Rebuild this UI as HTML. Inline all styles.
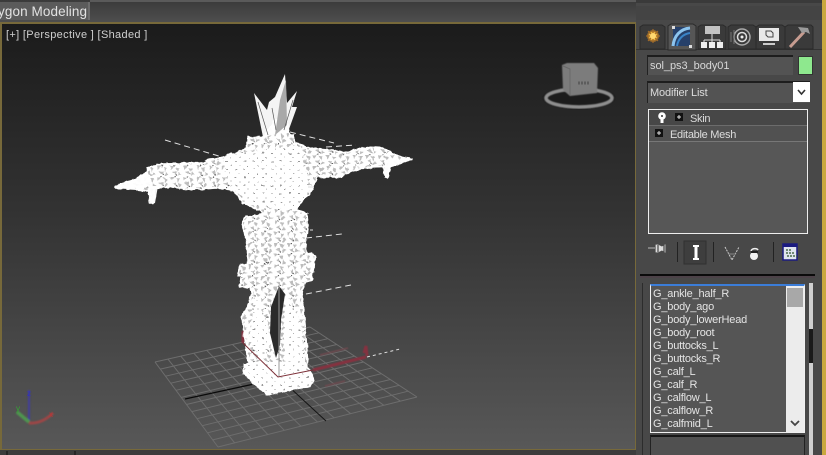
<!DOCTYPE html>
<html>
<head>
<meta charset="utf-8">
<style>
html,body{margin:0;padding:0;background:#444}
#p{position:relative;width:826px;height:455px;overflow:hidden;background:#484848;font-family:"Liberation Sans",sans-serif;font-size:11px;color:#dcdcdc}
#p div{position:absolute;box-sizing:border-box}
.t{white-space:nowrap;line-height:13px}
.l{left:653px;letter-spacing:-.2px;color:#e4e4e4}
</style>
</head>
<body>
<div id="p">
<div style="left:0;top:0;width:636px;height:22px;background:linear-gradient(#3a3a3a,#4e4e4e)"></div>
<div style="left:90px;top:0;width:546px;height:2px;background:#5a5a5a"></div>
<div style="left:0;top:2px;width:90px;height:18px;background:#5b5b5b;border-right:2px solid #6d6d6d"></div>
<div class="t" style="left:-2px;top:4px;font-size:13.5px;line-height:15px;color:#e2e2e2;letter-spacing:.1px">ygon Modeling</div>

<svg style="position:absolute;left:0;top:0" width="636" height="455" viewBox="0 0 636 455">
<defs>
<linearGradient id="bg" x1="0" y1="0" x2="0" y2="1"><stop offset="0" stop-color="#1b1b1b"/><stop offset=".45" stop-color="#333"/><stop offset="1" stop-color="#585858"/></linearGradient>
<pattern id="w" width="13" height="11" patternUnits="userSpaceOnUse">
<rect width="13" height="11" fill="#fff"/>
<path d="M1 1l4 0-3 4zM7 2l4 1-2 4zM3 7l4-1 0 4zM10 7l3 2-4 2z" fill="#bdbdbd"/>
<path d="M5 0l1 1M7 9l1 1" stroke="#555" stroke-width="1"/>
</pattern>
<pattern id="w2" width="9" height="8" patternUnits="userSpaceOnUse">
<rect width="9" height="8" fill="#fff"/>
<path d="M1 1h2v1h-2zM5 5h1v1h-1z" fill="#999"/>
</pattern>
<filter id="rough" x="-5%" y="-5%" width="110%" height="110%">
<feTurbulence type="fractalNoise" baseFrequency=".18" numOctaves="2" seed="4" result="n"/>
<feDisplacementMap in="SourceGraphic" in2="n" scale="4" xChannelSelector="R" yChannelSelector="G"/>
</filter>
<filter id="b1"><feGaussianBlur stdDeviation=".9"/></filter>
<filter id="b2"><feGaussianBlur stdDeviation=".5"/></filter>
</defs>
<rect x="1" y="23" width="635" height="427" fill="url(#bg)" stroke="#77693a" stroke-width="2"/>
<rect x="0" y="450" width="636" height="5" fill="#3c3c3c"/>
<path d="M7 451v4M75 451v4" stroke="#111"/>

<path fill="none" stroke="#6d6d6d" stroke-width="1" d="M155 362L218 447M167.900 359.100L234.600 442.800M180.800 356.200L251.200 438.700M193.800 353.200L267.700 434.500M206.700 350.300L284.300 430.300M219.600 347.400L300.900 426.200M232.500 344.500L317.500 422M245.400 341.600L334.100 417.800M258.300 338.700L350.700 413.700M271.300 335.700L367.200 409.500M284.200 332.800L383.800 405.300M297.100 329.900L400.400 401.200M310 327L417 397M155 362L310 327M160.300 369.100L318.900 332.800M165.500 376.200L327.800 338.700M170.800 383.200L336.800 344.500M176 390.300L345.700 350.300M181.300 397.400L354.600 356.200M186.500 404.500L363.500 362M191.800 411.600L372.400 367.800M197 418.700L381.400 373.700M202.300 425.700L390.300 379.500M207.500 432.800L399.200 385.300M212.800 439.900L408.100 391.200M218 447L417 397"/>
<path d="M185 399L254 384" stroke="#0a0a0a" stroke-width="1.200" fill="none"/>
<path d="M287 385L326 421" stroke="#151515" stroke-width="1" fill="none"/>
<g filter="url(#b2)">
<path d="M313 370L366 357M364 353l2-7 1 10" stroke="#85323f" stroke-width="3" fill="none"/>
<path d="M320 355l28-7M325 386l20-5" stroke="#6e4a50" stroke-width="1.500" fill="none"/>
<path d="M243 331v12" stroke="#85323f" stroke-width="3"/>
</g>

<g filter="url(#rough)">
<path fill="url(#w)" stroke="#fff" stroke-width="1.500" stroke-linejoin="round" d="M115 186L133 180L147 173L147 168L162 164L200 163L210 160L223 157L247 148L247 137L263 137L275 120L288 125L288 132L293 135L295 143L313 148L333 150L343 153L367 147L383 148L400 157L412 159L400 163L390 167L388 178L385 177L383 167L360 168L340 177L317 177L310 193L300 200L297 210L307 213L308 230L305 240L307 253L315 255L312 280L305 282L302 297L305 323L308 367L314 380L310 387L290 388L283 392L267 395L253 383L243 373L248 363L242 317L253 293L250 287L240 287L241 278L247 277L238 275L240 265L247 265L247 243L242 223L243 218L263 214L260 210L243 203L233 190L217 188L190 190L173 187L155 188L154 203L150 203L148 190L133 189L115 188Z"/>
<path fill="url(#w2)" d="M243 363L305 360L314 380L310 387L283 392L267 395L243 373ZM225 155L300 145L310 190L297 210L250 205L225 180ZM255 290L250 340L262 360L272 340ZM285 290L300 320L305 360L285 365Z"/>
</g>
<path fill="#fff" d="M115 186L133 180L150 175L152 186L133 189L115 188ZM148 186L158 186L155 203L150 203ZM385 160L412 159L400 163L390 167L388 178L385 177Z" opacity=".95"/>
<path fill="#fff" d="M263 137L254 93L267 110L269 102L275 97L285 74L287 103L297 91L292 107L297 107L288 132Z" opacity=".95"/>
<path fill="#a9a9a9" d="M280 100L286 80L287 125L275 135Z"/>
<path stroke="#555" stroke-width=".7" fill="none" d="M258 102L268 135M293 100L284 130M272 108L276 130"/>
<path fill="#2a2a2a" d="M279 286L271 307L270 333L276 358L280 345L281 320L285 294Z"/>
<path d="M279 285V377" stroke="#9a9a9a"/>
<path d="M243 343L278 377L313 370" stroke="#7d3038" fill="none"/>

<g stroke="#e0e0e0" stroke-width="1" stroke-dasharray="6 4" fill="none">
<path d="M165 140L222 157"/>
<path d="M290 132L334 143"/>
<path d="M326 147L356 145"/>
<path d="M306 238L342 234"/>
<path d="M306 294L351 285"/>
<path d="M367 357L400 349" stroke-dasharray="3 3"/>
</g>
<path d="M308 187h6M310 230h3" stroke="#ddd"/>

<ellipse cx="579" cy="98" rx="36" ry="11" fill="#1c1c1c" filter="url(#b2)"/>
<ellipse cx="579" cy="98" rx="33" ry="9" fill="none" stroke="#8e8e8e" stroke-width="3.500" filter="url(#b2)"/>
<path d="M562 65L567 63L594 63L598 68L597 93L570 96L563 90Z" fill="#7c7c7c" filter="url(#b2)"/>
<path d="M563 66L570 69L570 95" fill="none" stroke="#6a6a6a"/>
<path d="M578 83h12" stroke="#5d5d5d" stroke-width="3" stroke-dasharray="2 1"/>

<g filter="url(#b1)" opacity=".85">
<path d="M29 390V422" stroke="#3c3aa8" stroke-width="2"/>
<path d="M29 422L17 412" stroke="#4ea04e" stroke-width="3.500"/>
<path d="M29 423Q42 424 53 413" stroke="#a84444" stroke-width="3" fill="none"/>
</g>
<text x="27" y="396" font-size="8" fill="#3030c0" font-family="Liberation Sans">z</text>
<text x="49" y="417" font-size="8" fill="#b33" font-family="Liberation Sans">x</text>
<text x="16" y="411" font-size="8" fill="#3a3" font-family="Liberation Sans">y</text>
</svg>

<div class="t" style="left:6px;top:29px;color:#cfcfcf;letter-spacing:.33px">[+] [Perspective ] [Shaded ]</div>

<!-- right panel -->
<div style="left:636px;top:0;width:186px;height:455px;background:#484848"></div>
<div style="left:636px;top:0;width:186px;height:3px;background:#3a3a3a"></div>
<div style="left:636px;top:6px;width:186px;height:14px;background:#444"></div>
<div style="left:822px;top:0;width:4px;height:455px;background:#c9a83f"></div>
<div style="left:636px;top:49px;width:186px;height:1px;background:#333"></div>

<svg style="position:absolute;left:636px;top:22px" width="186" height="30" viewBox="0 0 186 30">
<g fill="#3a3a3a" stroke="#2a2a2a">
<path d="M4 27V5l3-2h19l3 2v22z"/>
<path d="M62 27V5l3-2h22l3 2v22z"/>
<path d="M92 27V5l3-2h22l3 2v22z"/>
<path d="M120 27V5l3-2h23l3 2v22z"/>
<path d="M149 27V5l3-2h23l2 2v22z"/>
</g>
<path d="M32 28V4l3-2h22l3 2v24z" fill="#565656" stroke="#2a2a2a"/>
<circle cx="17" cy="14" r="6" fill="#9a6a2a"/>
<circle cx="17" cy="14" r="4.500" fill="#f0b43a"/>
<path d="M10 14h14M17 7v14M12 9l10 10M22 9l-10 10" stroke="#a06a2a" stroke-width="1.200"/>
<circle cx="17" cy="14" r="3" fill="#ffd870"/>
<rect x="37" y="5" width="17" height="19" fill="#26406a"/>
<path d="M37 24C38 14 44 7 54 6" fill="none" stroke="#8cc4ee" stroke-width="3"/>
<path d="M41 24C42 17 47 12 54 11" fill="none" stroke="#3a84c8" stroke-width="2"/>
<rect x="36" y="4" width="3" height="3" fill="#ddd"/><rect x="53" y="23" width="3" height="3" fill="#ddd"/>
<rect x="69" y="4" width="15" height="8" fill="#c2c2c2"/>
<path d="M76 12V17M68 18H84M68 18v3M76 17v4M84 18v3" stroke="#ddd" fill="none"/>
<rect x="65" y="20" width="6" height="6" fill="#eee"/><rect x="73" y="20" width="6" height="6" fill="#eee"/><rect x="81" y="20" width="6" height="6" fill="#eee"/>
<circle cx="106" cy="15" r="8" fill="none" stroke="#aaa" stroke-width="1.500"/>
<circle cx="106" cy="15" r="4.500" fill="none" stroke="#ddd" stroke-width="1.500"/>
<circle cx="106" cy="15" r="1.500" fill="#eee"/>
<path d="M95 10v10M98 8v14" stroke="#777"/>
<rect x="123" y="6" width="20" height="13" fill="#e8e8e8"/>
<path d="M130 9h5l2 2v4h-5l-2-2z" fill="none" stroke="#444"/>
<path d="M127 22h12" stroke="#ccc" stroke-width="2"/>
<path d="M154 25L168 10" stroke="#c79c90" stroke-width="3"/>
<path d="M162 5L172 6L174 12L170 10L166 11Z" fill="#9a9a9a"/>
</svg>

<div style="left:647px;top:55px;width:146px;height:20px;background:#535353;border-top:2px solid #1d1d1d;border-left:1px solid #222"></div>
<div class="t" style="left:650px;top:60px;color:#d8d8d8;letter-spacing:-.05px">sol_ps3_body01</div>
<div style="left:798px;top:56px;width:15px;height:19px;background:#8ee88e;border:1px solid #333"></div>

<div style="left:647px;top:81px;width:163px;height:22px;background:#535353;border-top:2px solid #1d1d1d;border-left:1px solid #222"></div>
<div class="t" style="left:650px;top:87px;color:#dcdcdc;letter-spacing:-.13px">Modifier List</div>
<div style="left:793px;top:82px;width:17px;height:20px;background:#fff"></div>
<svg style="position:absolute;left:796px;top:88px" width="11" height="9"><path d="M2 2l3.500 4 3.500-4" fill="none" stroke="#333" stroke-width="1.600"/></svg>

<div style="left:648px;top:109px;width:160px;height:125px;background:#575757;border:1px solid #eee"></div>
<div style="left:649px;top:110px;width:158px;height:16px;background:#474747;border-bottom:1px solid #6c6c6c"></div>
<div style="left:649px;top:126px;width:158px;height:16px;background:#515151;border-bottom:1px solid #777"></div>
<div class="t" style="left:690px;top:113px;letter-spacing:-.3px">Skin</div>
<div class="t" style="left:670px;top:129px;letter-spacing:-.28px">Editable Mesh</div>
<svg style="position:absolute;left:654px;top:110px" width="30" height="32">
<circle cx="8" cy="6" r="3.800" fill="#fff"/><rect x="6.500" y="9" width="3" height="4" fill="#fff"/><circle cx="8" cy="6" r="1" fill="#333"/>
<rect x="21" y="3" width="8" height="8" fill="#111"/><path d="M25 5v4M23 7h4" stroke="#ddd"/>
<rect x="1" y="19" width="8" height="8" fill="#111"/><path d="M5 21v4M3 23h4" stroke="#ddd"/>
</svg>

<svg style="position:absolute;left:640px;top:238px" width="180" height="30">
<path d="M8 10h7M16 7v7h2l4-2 3 2v-7l-3 2-4-2z" fill="#ddd" stroke="#ddd" stroke-width=".8"/>
<path d="M18 7v7M24 7v7" stroke="#222"/>
<path d="M37.500 4v20M73.500 4v20M133.500 4v20" stroke="#222"/>
<rect x="44" y="3" width="22" height="23" fill="#3e3e3e" stroke="#303030"/>
<path d="M53 7h6v2h-1.500v11h1.500v2h-6v-2h1.500V9H53z" fill="#fff"/>
<path d="M85 9l7 13 7-13" fill="none" stroke="#ccc" stroke-dasharray="2 1"/>
<path d="M88 16h8" stroke="#888"/>
<circle cx="114" cy="18" r="4" fill="#f2f2f2"/><path d="M111 13c1-3 6-3 7-1" fill="none" stroke="#eee" stroke-width="1.500"/><rect x="111" y="13" width="7" height="2" fill="#222"/>
<rect x="143" y="6" width="14" height="16" fill="#dfe4ee" stroke="#1a1a80" stroke-width="1.500"/>
<rect x="143" y="6" width="14" height="3" fill="#1a1a80"/>
<path d="M146 12h6M146 15h9M147 18h10" stroke="#4b6b4b" stroke-dasharray="2 1" stroke-width="1.500"/>
</svg>

<div style="left:640px;top:274px;width:175px;height:2px;background:#0b0b0b"></div>
<div style="left:640px;top:276px;width:175px;height:2px;background:#4c4248"></div>

<div style="left:642px;top:283px;width:1px;height:172px;background:#2c2c2c"></div>
<div style="left:809px;top:283px;width:4px;height:172px;background:#cfcfcf"></div>
<div style="left:809px;top:329px;width:4px;height:34px;background:#1a1a1a"></div>

<div style="left:650px;top:284px;width:155px;height:149px;background:#555;border:1px solid #f0f0f0;border-top:2px solid #3b7dd8;overflow:hidden"></div>
<div style="left:786px;top:286px;width:18px;height:146px;background:#ececec"></div>
<div style="left:787px;top:288px;width:16px;height:19px;background:#a8a8a8"></div>
<svg style="position:absolute;left:789px;top:419px" width="12" height="10"><path d="M2 2l4 4 4-4" fill="none" stroke="#444" stroke-width="1.800"/></svg>
<div class="t l" style="top:288px">G_ankle_half_R</div>
<div class="t l" style="top:301px">G_body_ago</div>
<div class="t l" style="top:314px">G_body_lowerHead</div>
<div class="t l" style="top:327px">G_body_root</div>
<div class="t l" style="top:340px">G_buttocks_L</div>
<div class="t l" style="top:353px">G_buttocks_R</div>
<div class="t l" style="top:366px">G_calf_L</div>
<div class="t l" style="top:379px">G_calf_R</div>
<div class="t l" style="top:392px">G_calflow_L</div>
<div class="t l" style="top:405px">G_calflow_R</div>
<div class="t l" style="top:418px">G_calfmid_L</div>
<div style="left:650px;top:435px;width:155px;height:20px;background:#505050;border-top:2px solid #161616;border-left:1px solid #222;border-right:1px solid #222"></div>
</div>
</body>
</html>
